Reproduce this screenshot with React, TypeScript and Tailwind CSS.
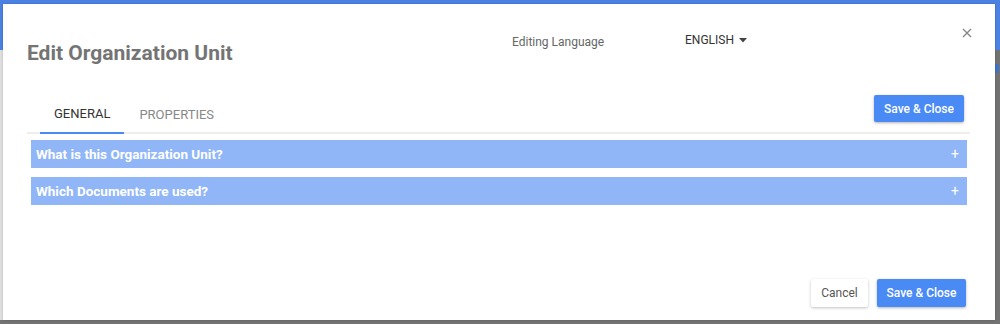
import React from "react";

export default function App() {
  return (
    <div className="relative w-[1000px] h-[324px] overflow-hidden bg-[#727272]" style={{ fontFamily: "Roboto, 'Liberation Sans', sans-serif" }}>
      {/* backdrop pieces */}
      <div className="absolute left-0 top-0 w-[1000px] h-[50px] bg-[#4a81e2]" />
      <div className="absolute left-0 top-[50px] w-[3px] h-[270px] bg-[#dedede]" />
      <div className="absolute right-[1px] top-[64px] w-[4px] h-[9px] rounded-full bg-[#3f72c9]" />

      <div className="relative ml-[3px] mt-[4px] w-[992px] h-[316px] bg-white flex flex-col shadow-[0_0_2px_rgba(0,0,0,0.2)]">
        {/* header */}
        <div className="flex h-[91px] pl-[24px]">
          <div className="w-[485px] mt-[35px] text-[21px] leading-[28px] font-bold text-[#747474]">Edit Organization Unit</div>
          <div className="w-[173px] mt-[30px] text-[12px] leading-[16px] text-[#666]">Editing Language</div>
          <div className="mt-[28px] flex items-center gap-[5px] h-[16px] text-[12px] leading-[16px] text-[#333]">
            <span>ENGLISH</span>
            <svg width="8" height="5" viewBox="0 0 8 5"><path d="M0 0 L8 0 L4 4.5 Z" fill="#444" /></svg>
          </div>
          <div className="flex-1" />
          <button className="mt-[24px] mr-[23px] w-[10px] h-[10px] flex items-center justify-center">
            <svg width="10" height="10" viewBox="0 0 10 10"><path d="M1 1 L9 9 M9 1 L1 9" stroke="#888" strokeWidth="1.4" /></svg>
          </button>
        </div>

        {/* tabs row */}
        <div className="mx-[24px] w-[943px] flex items-end justify-between border-b-2 border-[#eeeeee]">
          <div className="flex ml-[13px] -mb-[2px]">
            <div className="px-[14px] h-[39px] flex items-center border-b-2 border-[#4a8af4] text-[13px] text-[#333]">GENERAL</div>
            <div className="px-[15px] h-[39px] flex items-center text-[13px] text-[#888]">PROPERTIES</div>
          </div>
          <button className="mb-[10px] mr-[6px] w-[90px] h-[27px] rounded-[2px] bg-[#4a8af4] text-white text-[12px] font-medium shadow-[0_1px_3px_rgba(0,0,0,0.3)]">Save &amp; Close</button>
        </div>

        {/* accordions */}
        <div className="mx-[28px] mt-[6px] flex flex-col gap-[9px]">
          <div className="h-[28px] bg-[#90b6f8] flex items-center justify-between pl-[5px] pr-[8px] text-white text-[13.5px] font-bold">
            <span>What is this Organization Unit?</span>
            <span className="text-[14px] font-normal">+</span>
          </div>
          <div className="h-[28px] bg-[#90b6f8] flex items-center justify-between pl-[5px] pr-[8px] text-white text-[13.5px] font-bold">
            <span>Which Documents are used?</span>
            <span className="text-[14px] font-normal">+</span>
          </div>
        </div>

        <div className="flex-1" />

        {/* footer */}
        <div className="flex justify-end gap-[9px] pr-[29px] pb-[13px]">
          <button className="w-[57px] h-[28px] rounded-[2px] bg-white text-[#555] text-[12px] shadow-[0_1px_3px_rgba(0,0,0,0.25)]">Cancel</button>
          <button className="w-[89px] h-[28px] rounded-[2px] bg-[#4a8af4] text-white text-[12px] font-medium shadow-[0_1px_3px_rgba(0,0,0,0.3)]">Save &amp; Close</button>
        </div>
      </div>
    </div>
  );
}
